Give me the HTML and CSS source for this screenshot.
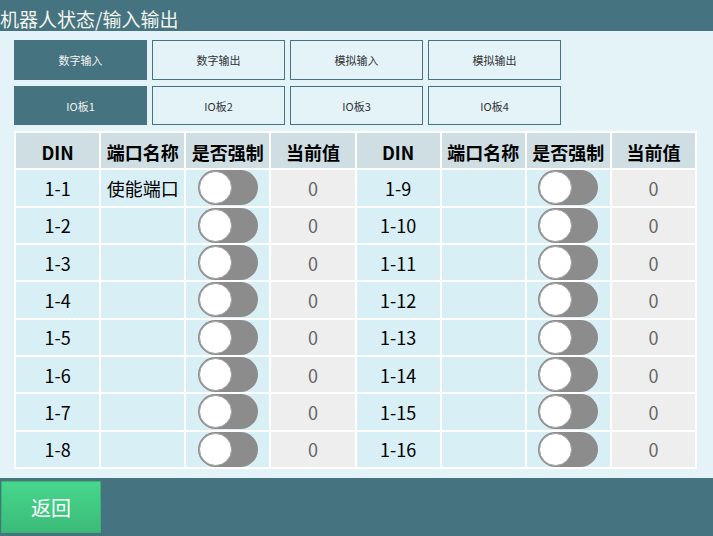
FILE: index.html
```html
<!DOCTYPE html>
<html lang="zh-CN">

<head>
    <meta charset="UTF-8">
    <meta name="viewport" content="width=device-width, initial-scale=1.0">
    <title>机器人状态/输入输出</title>
    <link rel="stylesheet" href="styles.css">
</head>

<body>
    <div id="app">
        <header class="topbar">机器人状态/输入输出</header>

        <main class="content">
            <div class="tabs">
                <button class="tab active">数字输入</button>
                <button class="tab">数字输出</button>
                <button class="tab">模拟输入</button>
                <button class="tab">模拟输出</button>
            </div>
            <div class="tabs">
                <button class="tab active">IO板1</button>
                <button class="tab">IO板2</button>
                <button class="tab">IO板3</button>
                <button class="tab">IO板4</button>
            </div>

            <table class="io-table">
                <thead>
                    <tr>
                        <th>DIN</th>
                        <th>端口名称</th>
                        <th>是否强制</th>
                        <th>当前值</th>
                        <th>DIN</th>
                        <th>端口名称</th>
                        <th>是否强制</th>
                        <th>当前值</th>
                    </tr>
                </thead>
                <tbody id="rows">
                </tbody>
            </table>
        </main>

        <footer class="bottombar">
            <button class="back-btn">返回</button>
        </footer>
    </div>

    <script>
        const rows = document.querySelector("#rows");
        const names = { 1: "使能端口" };

        for (let i = 1; i <= 8; i++) {
            let tr = document.createElement("tr");
            [i, i + 8].forEach((n) => {
                tr.innerHTML += `
                    <td>1-${n}</td>
                    <td>${names[n] || ""}</td>
                    <td><span class="switch"><span class="knob"></span></span></td>
                    <td class="value">0</td>`;
            });
            rows.append(tr);
        }
    </script>
</body>

</html>
```

FILE: styles.css
```css
* {
    padding: 0;
    margin: 0;
    box-sizing: border-box;
}

body {
    width: 713px;
    height: 536px;
    overflow: hidden;
    font-family: "Noto Sans CJK SC", "Noto Sans", sans-serif;
}

#app {
    height: 536px;
    display: flex;
    flex-direction: column;
}

.topbar {
    height: 31px;
    background-color: #467380;
    color: #f4f4ee;
    font-size: 19px;
    line-height: 38px;
    overflow: hidden;
}

.content {
    flex: 1;
    background-color: #e3f3f8;
    padding: 9px 14px 0 14px;
    display: flex;
    flex-direction: column;
    gap: 6px;
}

.tabs {
    display: flex;
    gap: 5px;
}

.tab {
    width: 133px;
    height: 40px;
    border: 1px solid #467380;
    background-color: #e3f3f8;
    color: #333;
    font-family: inherit;
    font-size: 11px;
}

.tabs+.tabs .tab {
    height: 39px;
}

.tab.active {
    background-color: #467380;
    color: #f2f2f2;
}

.io-table {
    width: 683px;
    height: 338px;
    table-layout: fixed;
    background-color: #fff;
    border-spacing: 2px;
    text-align: center;
    font-size: 18px;
    line-height: 1;
    color: #000;
}

.io-table tr {
    height: 35.3px;
}

.io-table th {
    background-color: #cfdee3;
    font-weight: bold;
    padding-top: 2px;
}

.io-table td {
    background-color: #d9eff6;
    padding: 0;
}

.io-table td.value {
    background-color: #eeeeee;
    color: #666;
}

.switch {
    display: block;
    position: relative;
    width: 60px;
    height: 35px;
    margin: 0 auto;
    border-radius: 18px;
    background-color: #8c8c8c;
}

.knob {
    position: absolute;
    left: 1px;
    top: 1px;
    width: 33px;
    height: 33px;
    border-radius: 50%;
    background-color: #fff;
    border: 1px solid #a0a0a0;
}

.bottombar {
    height: 58px;
    background-color: #467380;
    padding: 3px 0 0 1px;
}

.back-btn {
    width: 100px;
    height: 52px;
    border: 1px solid #38b573;
    background: linear-gradient(#47d78c, #3bbb78);
    color: #fff;
    font-family: inherit;
    font-size: 20px;
}
```
